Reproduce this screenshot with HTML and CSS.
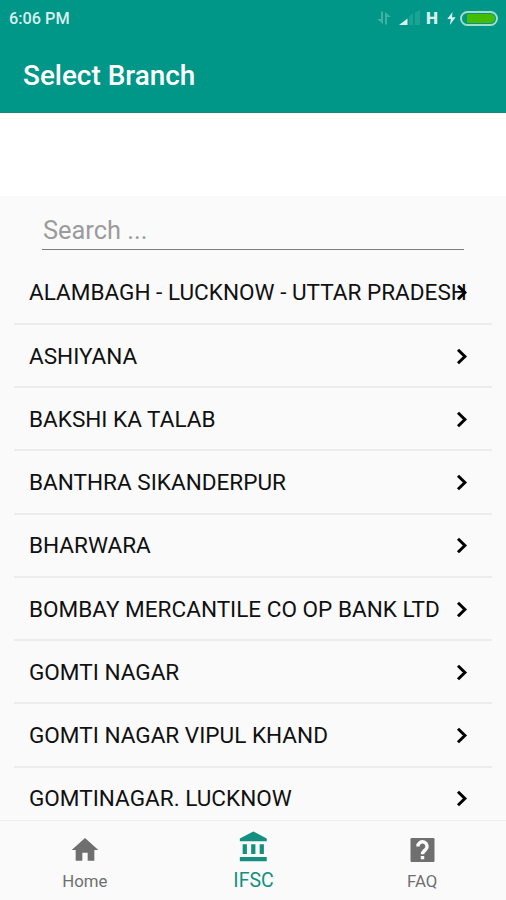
FILE: index.html
```html
<!DOCTYPE html>
<html lang="en">
<head>
    <meta charset="UTF-8">
    <meta name="viewport" content="width=device-width, initial-scale=1.0">
    <title>Select Branch</title>
    <link rel="stylesheet" href="styles.css">
</head>
<body>
    <header class="header">
        <div class="status_bar">
            <span class="time">6:06 PM</span>
            <div class="status_icons">
                <svg class="icon_data" width="14" height="14" viewBox="0 0 14 14">
                    <path d="M4 8V0.500H6V13L0 8ZM8 13.500V1L14 6H10V13.500Z" fill="#fff"/>
                </svg>
                <svg class="icon_signal" width="22" height="16" viewBox="0 0 22 16">
                    <path d="M0 15L8.5 8.5V15Z" fill="#d8f0ed"/>
                    <path d="M10 6L14 3.5V15H10ZM16 2.5L21 0V15H16Z" fill="#fff" fill-opacity=".12"/>
                </svg>
                <span class="network">H</span>
                <svg class="icon_bolt" width="9" height="13" viewBox="0 0 9 13">
                    <path d="M5.5 0L0.3 7H3.9L2.8 13L8.7 5.2H5Z" fill="#d8f0ed"/>
                </svg>
                <div class="battery"><div class="battery_level"></div></div>
            </div>
        </div>
        <h1>Select Branch</h1>
    </header>

    <div class="ad_space"></div>

    <main class="content">
        <div class="search">
            <input type="text" id="search" placeholder="Search ...">
        </div>

        <ul class="branch_list">
            <li><span>ALAMBAGH - LUCKNOW - UTTAR PRADESH</span><svg class="arrow" viewBox="0 0 12 17"><path d="M2 1.7L8.9 8.5L2 15.3"/></svg></li>
            <li><span>ASHIYANA</span><svg class="arrow" viewBox="0 0 12 17"><path d="M2 1.7L8.9 8.5L2 15.3"/></svg></li>
            <li><span>BAKSHI KA TALAB</span><svg class="arrow" viewBox="0 0 12 17"><path d="M2 1.7L8.9 8.5L2 15.3"/></svg></li>
            <li><span>BANTHRA SIKANDERPUR</span><svg class="arrow" viewBox="0 0 12 17"><path d="M2 1.7L8.9 8.5L2 15.3"/></svg></li>
            <li><span>BHARWARA</span><svg class="arrow" viewBox="0 0 12 17"><path d="M2 1.7L8.9 8.5L2 15.3"/></svg></li>
            <li><span>BOMBAY MERCANTILE CO OP BANK LTD</span><svg class="arrow" viewBox="0 0 12 17"><path d="M2 1.7L8.9 8.5L2 15.3"/></svg></li>
            <li><span>GOMTI NAGAR</span><svg class="arrow" viewBox="0 0 12 17"><path d="M2 1.7L8.9 8.5L2 15.3"/></svg></li>
            <li><span>GOMTI NAGAR VIPUL KHAND</span><svg class="arrow" viewBox="0 0 12 17"><path d="M2 1.7L8.9 8.5L2 15.3"/></svg></li>
            <li><span>GOMTINAGAR. LUCKNOW</span><svg class="arrow" viewBox="0 0 12 17"><path d="M2 1.7L8.9 8.5L2 15.3"/></svg></li>
        </ul>
    </main>

    <nav class="bottom_nav">
        <a class="nav_item">
            <svg width="32" height="32" viewBox="0 0 24 24"><path d="M10 20v-6h4v6h5v-8h3L12 3 2 12h3v8z"/></svg>
            <span>Home</span>
        </a>
        <a class="nav_item active">
            <svg width="34" height="34" viewBox="0 0 24 24"><path d="M4 10v7h3v-7H4zm6 0v7h3v-7h-3zM2 22h19v-3H2v3zm14-12v7h3v-7h-3zm-4.5-9L2 6v2h19V6l-9.5-5z"/></svg>
            <span>IFSC</span>
        </a>
        <a class="nav_item">
            <svg width="33" height="33" viewBox="0 0 24 24">
                <rect x="3" y="3" width="18" height="18" rx="1"/>
                <path class="question" d="M8.6 9.4a3.4 3.4 0 1 1 5.8 2.300c-1.300 1.300-2.400 1.600-2.400 3.500M12 16.500v2.500"/>
            </svg>
            <span>FAQ</span>
        </a>
    </nav>
</body>
</html>
```
FILE: styles.css
```css
* {
    box-sizing: border-box;
}

body {
    margin: 0;
    height: 100vh;
    display: flex;
    flex-direction: column;
    overflow: hidden;
    font-family: Roboto, sans-serif;
    background: #fafafa;
}

.header {
    flex: none;
    height: 113px;
    background: #009688;
    border-bottom: 1px solid #148579;
    color: #ffffff;
}

.status_bar {
    display: flex;
    justify-content: space-between;
    height: 36px;
    padding: 0 8px 0 9px;
    align-items: center;
}

.time {
    font-size: 16.3px;
    font-weight: 500;
    color: #d8f0ed;
}

.status_icons {
    display: flex;
    align-items: center;
}

.icon_data {
    margin-right: 8px;
    opacity: 0.25;
}

.icon_signal {
    margin-right: 5px;
}

.network {
    width: 12px;
    margin-right: 9px;
    font-size: 17px;
    font-weight: 900;
    color: #d8f0ed;
}

.icon_bolt {
    margin-right: 4px;
}

.battery {
    width: 38px;
    height: 15px;
    padding: 1px 1px 1px 5px;
    border: 2px solid #a4dcc8;
    border-radius: 8px;
}

.battery_level {
    height: 100%;
    background: #44bd00;
    border-radius: 1px 5px 5px 1px;
}

h1 {
    margin: 22px 0 0 23px;
    font-size: 27.9px;
    line-height: 36px;
    font-weight: 500;
}

.ad_space {
    flex: none;
    height: 83px;
    background: #ffffff;
}

.content {
    flex: 1;
    min-height: 0;
    overflow: hidden;
}

.search {
    height: 65.5px;
    padding: 15px 42px 0;
}

.search input {
    display: block;
    width: 100%;
    height: 39px;
    padding: 0 0 1px 1px;
    border: none;
    border-bottom: 1.5px solid #7d7d7d;
    background: none;
    font-family: inherit;
    font-size: 25.4px;
}

.search input::placeholder {
    color: #9b9b9b;
}

.branch_list {
    list-style: none;
    margin: 0 14px;
    padding: 0;
}

.branch_list li {
    display: flex;
    align-items: center;
    justify-content: space-between;
    height: 63.25px;
    padding: 1.5px 24px 0 15px;
    border-bottom: 2px solid #ececec;
    font-size: 22.55px;
    color: #111111;
    white-space: nowrap;
}

.branch_list span {
    min-width: 0;
}

.arrow {
    flex: none;
    width: 12px;
    height: 17px;
    margin-left: -12px;
    fill: none;
    stroke: #000000;
    stroke-width: 3;
}

.bottom_nav {
    flex: none;
    display: flex;
    height: 80px;
    border-top: 1px solid #eeeeee;
    background: #fafafa;
}

.nav_item {
    flex: 1;
    display: flex;
    flex-direction: column;
    align-items: center;
    padding: 13px 0 0 1px;
    font-size: 16.8px;
    line-height: 20px;
    color: #6f6f6f;
    fill: #6f6f6f;
}

.nav_item svg {
    flex: none;
    height: 32px;
    margin-bottom: 5px;
}

.question {
    fill: none;
    stroke: #fafafa;
    stroke-width: 2.6;
}

.active {
    padding-top: 9px;
    font-size: 19.5px;
    color: #149080;
    fill: #149080;
}

.active svg {
    height: 34px;
    margin-bottom: 7px;
}
```
